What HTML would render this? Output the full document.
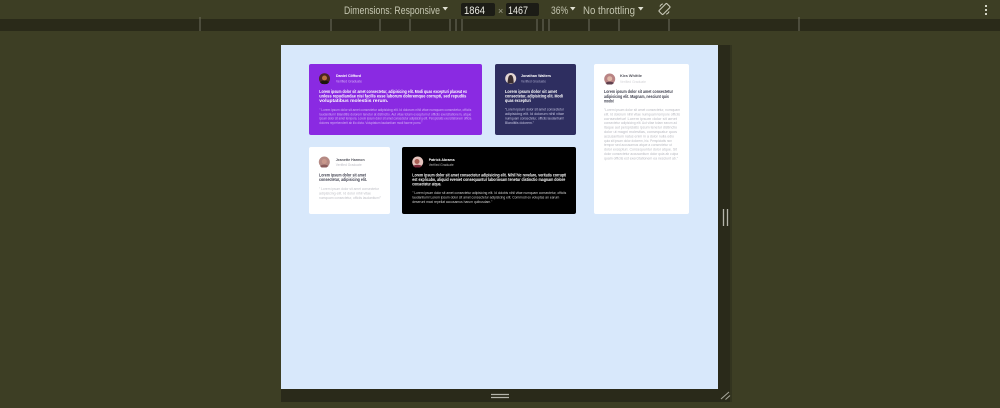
<!DOCTYPE html>
<html lang="en"><head><meta charset="utf-8"><title>Testimonials responsive preview</title>
<style>
html,body{margin:0;padding:0;width:1000px;height:408px;overflow:hidden;background:#3d3e24}
svg{position:absolute;left:0;top:0;display:block}
text{font-family:"Liberation Sans",sans-serif}
.b{font-weight:700}
</style></head><body>
<svg width="1000" height="408" viewBox="0 0 1000 408" xmlns="http://www.w3.org/2000/svg">
<defs>
<filter id="s" x="-10%" y="-10%" width="120%" height="120%"><feGaussianBlur stdDeviation=".32"/></filter>
<filter id="t" x="-5%" y="-20%" width="110%" height="140%"><feGaussianBlur stdDeviation=".3"/></filter>
<filter id="c" x="-10%" y="-10%" width="120%" height="120%"><feGaussianBlur stdDeviation=".25"/></filter>
</defs>
<rect width="1000" height="408" fill="#3d3e24"/>
<!-- ruler -->
<rect x="0" y="19" width="1000" height="12" fill="#2a2a19"/>
<g stroke="#6f6f5e" stroke-width="1">
<path d="M200 17V31M331 19V31M380 19V31M410 19V31M450 19V31M456 19V31M462 19V31M537 19V31M543 19V31M549 19V31M589 19V31M619 19V31M669 19V31M799 17V31"/>
</g>
<!-- toolbar -->
<g filter="url(#t)">
<rect x="461" y="3" width="34" height="13" rx="2" fill="#1b1b14"/>
<rect x="506" y="3" width="33" height="13" rx="2" fill="#1b1b14"/>
<text x="344" y="14" font-size="11" fill="#c4c5b0" textLength="96" lengthAdjust="spacingAndGlyphs">Dimensions: Responsive</text>
<path d="M442.500 7h5.500l-2.750 3.500z" fill="#e0e0d2"/>
<text x="464" y="14" font-size="11" fill="#ecece4" textLength="21" lengthAdjust="spacingAndGlyphs">1864</text>
<text x="498" y="14" font-size="9" fill="#a5a592">×</text>
<text x="508" y="14" font-size="11" fill="#ecece4" textLength="20" lengthAdjust="spacingAndGlyphs">1467</text>
<text x="551" y="14" font-size="11" fill="#c4c5b0" textLength="17" lengthAdjust="spacingAndGlyphs">36%</text>
<path d="M570 7h5.500l-2.750 3.500z" fill="#e0e0d2"/>
<text x="583" y="14" font-size="11" fill="#c4c5b0" textLength="52" lengthAdjust="spacingAndGlyphs">No throttling</text>
<path d="M638 7h5.500l-2.750 3.500z" fill="#e0e0d2"/>
<g transform="rotate(45 664.500 9)" fill="none" stroke="#c8c8b8" stroke-width="1.100">
<rect x="661.700" y="3.500" width="5.600" height="11" rx="1"/>
<path d="M659.500 10.500a5.500 5.500 0 0 1 0-4M669.500 7.500a5.500 5.500 0 0 1 0 4"/>
</g>
<g fill="#d4d4c5"><rect x="985" y="5" width="2" height="2"/><rect x="985" y="9" width="2" height="2"/><rect x="985" y="13" width="2" height="2"/></g>
</g>
<!-- device frame -->
<rect x="281" y="45" width="449" height="357" fill="#2a2a1a"/>
<rect x="730" y="45" width="2" height="357" fill="#33341f"/>
<rect x="281" y="45" width="437" height="344" fill="#d8e8fb"/>
<path d="M723.500 209V226M727.500 209V226" stroke="#b5b5ab" stroke-width="1.300"/>
<path d="M491 394.500H509M491 397.500H509" stroke="#b5b5ab" stroke-width="1.300"/>
<path d="M721 399L729 392M725.500 399.500L730 395.500" stroke="#a5a59a" stroke-width="1.100"/>

<!-- cards -->
<g filter="url(#c)">
<rect x="309" y="64" width="173" height="71" rx="2" fill="#8a2be2"/>
<rect x="495" y="64" width="81" height="71" rx="2" fill="#2e2f60"/>
<rect x="594" y="64" width="95" height="150" rx="2" fill="#ffffff"/>
<rect x="309" y="147" width="81" height="67" rx="2" fill="#ffffff"/>
<rect x="402" y="147" width="174" height="67" rx="2" fill="#000000"/>

<!-- avatars -->
<circle cx="324.500" cy="78.700" r="5.500" fill="#4a2620"/><circle cx="324.500" cy="78" r="2.500" fill="#b8703f"/><path d="M320 82.500a5 3.500 0 0 1 9 0l-2 1.500h-5z" fill="#1e120f"/>
<circle cx="510.700" cy="78.500" r="5.500" fill="#e3d5d2"/><path d="M507.500 83.500c.5-6 1-8.500 3.200-8.500s2.800 3 3 8.500z" fill="#3a2f30"/>
<circle cx="609.700" cy="79" r="5.500" fill="#b98484"/><circle cx="609.700" cy="78.700" r="2.500" fill="#e0b8a8"/><path d="M605.500 83a5 3 0 0 1 8.500 0l-2 1.500h-5z" fill="#5e3f4d"/>
<circle cx="324.300" cy="162" r="5.500" fill="#b58a84"/><circle cx="324.300" cy="161.500" r="2.500" fill="#c9988c"/><path d="M320 166a5 3 0 0 1 8.500 0l-2 1.500h-5z" fill="#8c5c5c"/>
<circle cx="417.700" cy="162" r="5.500" fill="#e4c3bd"/><circle cx="417" cy="161.500" r="2.500" fill="#a85f55"/><path d="M413 166a5.500 3 0 0 1 9 0l-2 1.500h-5z" fill="#7a2c3a"/>
</g>

<g filter="url(#s)">
<!-- Daniel -->
<text class="b" x="336" y="77.200" font-size="4" fill="#ffffff" textLength="25" lengthAdjust="spacingAndGlyphs">Daniel Clifford</text>
<text x="336" y="82.300" font-size="3.600" fill="#d4adf6" textLength="26" lengthAdjust="spacingAndGlyphs">Verified Graduate</text>
<g font-size="4.100" fill="#ffffff">
<text class="b" x="319.300" y="93.100" textLength="147.700" lengthAdjust="spacingAndGlyphs">Lorem ipsum dolor sit amet consectetur, adipisicing elit. Modi quas excepturi placeat ex</text>
<text class="b" x="319.300" y="97.500" textLength="147" lengthAdjust="spacingAndGlyphs">unless repudiandae nisi facilis esse laborum doloremque corrupti, sed repudiis</text>
<text class="b" x="319.300" y="101.900" textLength="69" lengthAdjust="spacingAndGlyphs">voluptatibus molestiis rerum.</text>
</g>
<g font-size="3.700" fill="#d3aef5">
<text x="319.300" y="111" textLength="152" lengthAdjust="spacingAndGlyphs">" Lorem ipsum dolor sit amet consectetur adipisicing elit. Id dolorum nihil vitae numquam consectetur, officiis</text>
<text x="319.300" y="115.300" textLength="152" lengthAdjust="spacingAndGlyphs">laudantium! Blanditiis dolorem tenetur at distinctio. Aut vitae totam excepturi ut officiis exercitationem, atque</text>
<text x="319.300" y="119.600" textLength="152" lengthAdjust="spacingAndGlyphs">ipsum dolor sit amet tempora. Lorem ipsum dolor sit amet consectetur adipisicing elit. Perspiciatis exercitationem officia</text>
<text x="319.300" y="124" textLength="103" lengthAdjust="spacingAndGlyphs">dolores reprehenderit ab illo dicta. Voluptatum laudantium modi facere porro."</text>
</g>
<!-- Jonathan -->
<text class="b" x="521" y="77" font-size="4" fill="#ffffff" textLength="30" lengthAdjust="spacingAndGlyphs">Jonathan Walters</text>
<text x="521" y="82.300" font-size="3.600" fill="#a5a5c8" textLength="25" lengthAdjust="spacingAndGlyphs">Verified Graduate</text>
<text class="b" x="505" y="93.100" font-size="4.100" fill="#ffffff" textLength="52" lengthAdjust="spacingAndGlyphs">Lorem ipsum dolor sit amet</text>
<text class="b" x="505" y="97.600" font-size="4.100" fill="#ffffff" textLength="58" lengthAdjust="spacingAndGlyphs">consectetur, adipisicing elit. Modi</text>
<text class="b" x="505" y="102.100" font-size="4.100" fill="#ffffff" textLength="26" lengthAdjust="spacingAndGlyphs">quas excepturi</text>
<g font-size="3.700" fill="#c4c4e0">
<text x="505" y="110.700" textLength="59" lengthAdjust="spacingAndGlyphs">"Lorem ipsum dolor sit amet consectetur</text>
<text x="505" y="115.200" textLength="59" lengthAdjust="spacingAndGlyphs">adipisicing elit. Id dolorum nihil vitae</text>
<text x="505" y="119.700" textLength="59" lengthAdjust="spacingAndGlyphs">numquam consectetur, officiis laudantium!</text>
<text x="505" y="124.200" textLength="29" lengthAdjust="spacingAndGlyphs">Blanditiis dolorem."</text>
</g>
<!-- Kira -->
<text class="b" x="620" y="77" font-size="4" fill="#55565f" textLength="22" lengthAdjust="spacingAndGlyphs">Kira Whittle</text>
<text x="620" y="82.800" font-size="3.600" fill="#d2d2d6" textLength="26" lengthAdjust="spacingAndGlyphs">Verified Graduate</text>
<g font-size="4.100" fill="#3c3d4c">
<text class="b" x="604" y="93.100" textLength="69" lengthAdjust="spacingAndGlyphs">Lorem ipsum dolor sit amet consectetur</text>
<text class="b" x="604" y="97.900" textLength="65" lengthAdjust="spacingAndGlyphs">adipisicing elit. Magnam, nesciunt quis</text>
<text class="b" x="604" y="102.700" textLength="10" lengthAdjust="spacingAndGlyphs">modo!</text>
</g>
<g font-size="3.700" fill="#b8b9c0">
<text x="604" y="111" textLength="76" lengthAdjust="spacingAndGlyphs">"Lorem ipsum dolor sit amet consectetur, numquam</text>
<text x="604" y="115.400" textLength="76" lengthAdjust="spacingAndGlyphs">elit. Id dolorum nihil vitae numquam tempore officiis</text>
<text x="604" y="119.800" textLength="73" lengthAdjust="spacingAndGlyphs">consectetur! Lorem ipsum dolor sit amet</text>
<text x="604" y="124.200" textLength="73" lengthAdjust="spacingAndGlyphs">consectetur adipisicing elit. Aut vitae totam earum ad</text>
<text x="604" y="128.600" textLength="73" lengthAdjust="spacingAndGlyphs">itaque aut perspiciatis ipsum tenetur distinctio</text>
<text x="604" y="133" textLength="73" lengthAdjust="spacingAndGlyphs">dolor ut magni molestias, consequatur quos</text>
<text x="604" y="137.400" textLength="70" lengthAdjust="spacingAndGlyphs">accusantium natus enim in a dolor nulla odio</text>
<text x="604" y="141.800" textLength="68" lengthAdjust="spacingAndGlyphs">quia sit ipsum dolor dolorem, hic. Perspiciatis non</text>
<text x="604" y="146.200" textLength="68" lengthAdjust="spacingAndGlyphs">tempor sed accusamus atque a consectetur ut</text>
<text x="604" y="150.600" textLength="73" lengthAdjust="spacingAndGlyphs">dolor excepturi. Consequuntur dolor atque. Sit</text>
<text x="604" y="155" textLength="74" lengthAdjust="spacingAndGlyphs">dolor consectetur accusantium dolor quia ab culpa</text>
<text x="604" y="159.400" textLength="74" lengthAdjust="spacingAndGlyphs">quam officiis est exercitationem ea nesciunt ab."</text>
</g>
<!-- Jeanette -->
<text class="b" x="335.700" y="160.800" font-size="4" fill="#55565f" textLength="29" lengthAdjust="spacingAndGlyphs">Jeanette Harmon</text>
<text x="335.700" y="166" font-size="3.600" fill="#bcbcc4" textLength="26" lengthAdjust="spacingAndGlyphs">Verified Graduate</text>
<text class="b" x="319" y="176.400" font-size="4.100" fill="#3c3d4c" textLength="47" lengthAdjust="spacingAndGlyphs">Lorem ipsum dolor sit amet</text>
<text class="b" x="319" y="180.800" font-size="4.100" fill="#3c3d4c" textLength="48" lengthAdjust="spacingAndGlyphs">consectetur, adipisicing elit.</text>
<g font-size="3.700" fill="#bebfc5">
<text x="319" y="190" textLength="60" lengthAdjust="spacingAndGlyphs">" Lorem ipsum dolor sit amet consectetur</text>
<text x="319" y="194.400" textLength="52" lengthAdjust="spacingAndGlyphs">adipisicing elit. Id dolor nihil vitae</text>
<text x="319" y="198.800" textLength="62" lengthAdjust="spacingAndGlyphs">numquam consectetur, officiis laudantium!"</text>
</g>
<!-- Patrick -->
<text class="b" x="428.700" y="161" font-size="4" fill="#ffffff" textLength="26" lengthAdjust="spacingAndGlyphs">Patrick Abrams</text>
<text x="428.700" y="166" font-size="3.600" fill="#b5b5b5" textLength="25" lengthAdjust="spacingAndGlyphs">Verified Graduate</text>
<g font-size="4.100" fill="#ffffff">
<text class="b" x="412.300" y="176.400" textLength="154" lengthAdjust="spacingAndGlyphs">Lorem ipsum dolor sit amet consectetur adipisicing elit. Nihil hic revelare, veritatis corrupti</text>
<text class="b" x="412.300" y="180.800" textLength="153" lengthAdjust="spacingAndGlyphs">est explicabo, aliquid eveniet consequuntur laboriosam tenetur distinctio magnam dolore</text>
<text class="b" x="412.300" y="185.300" textLength="29" lengthAdjust="spacingAndGlyphs">consectetur atque.</text>
</g>
<g font-size="3.700" fill="#d0d0d0">
<text x="412.300" y="194.200" textLength="154" lengthAdjust="spacingAndGlyphs">" Lorem ipsum dolor sit amet consectetur adipisicing elit. Id dolobis nihil vitae numquam consectetur, officiis</text>
<text x="412.300" y="198.600" textLength="147" lengthAdjust="spacingAndGlyphs">laudantium! Lorem ipsum dolor sit amet consectetur adipisicing elit. Commodi ex voluptas an earum</text>
<text x="412.300" y="203.200" textLength="80" lengthAdjust="spacingAndGlyphs">deserunt maxi repellat accusamus harum quibusdam."</text>
</g>
</g>
</svg>
</body></html>
